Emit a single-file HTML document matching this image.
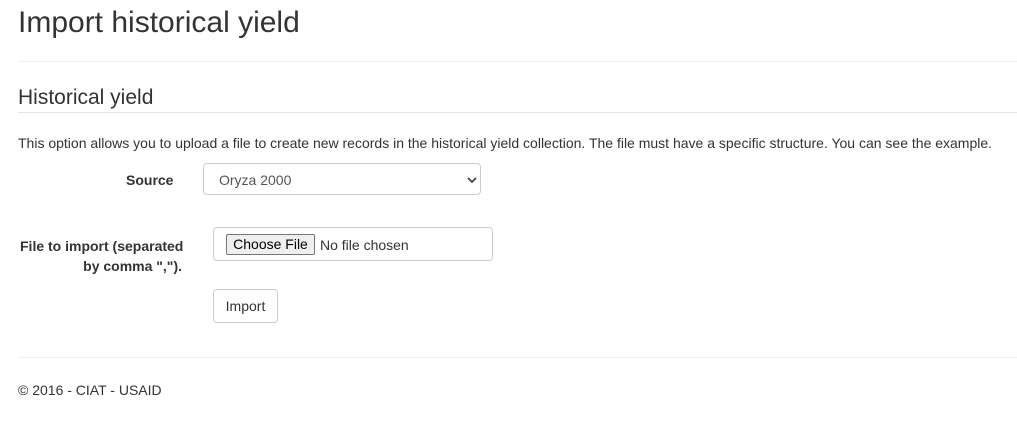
<!DOCTYPE html>
<html><head><style>
body{margin:0;background:#fff;font-family:"Liberation Sans",Arial,sans-serif;color:#333;font-size:14px;}
.a{position:absolute;white-space:nowrap;}
.hr{position:absolute;left:18px;right:0;height:1px;background:#eee;}
</style></head><body>
<div class="a" style="left:18px;top:6px;font-size:30px;font-weight:300;color:#333;">Import historical yield</div>
<div class="hr" style="top:61px"></div>
<div class="a" style="left:18px;top:86px;font-size:21px;">Historical yield</div>
<div class="hr" style="top:112px;background:#e5e5e5"></div>
<div class="a" style="left:18px;top:135px;font-size:14px;">This option allows you to upload a file to create new records in the historical yield collection. The file must have a specific structure. You can see the example.</div>
<div class="a" style="left:126px;top:172px;font-weight:bold;">Source</div>
<div class="a" style="left:203px;top:163px;width:278px;height:32px;border:1px solid #ccc;border-radius:4px;box-sizing:border-box;"></div>
<div class="a" style="left:219px;top:172px;color:#555;">Oryza 2000</div>
<svg class="a" style="left:467px;top:176px" width="10" height="8"><path d="M1 2 L5 6 L9 2" stroke="#444" stroke-width="1.8" fill="none"/></svg>
<div class="a" style="left:20px;top:236px;font-weight:bold;text-align:right;line-height:20px;width:162px;">File to import (separated<br>by comma ",").</div>
<div class="a" style="left:213px;top:227px;width:280px;height:34px;border:1px solid #ccc;border-radius:4px;box-sizing:border-box;"></div>
<div class="a" style="left:226px;top:234px;width:89px;height:21px;border:1px solid #767676;border-radius:2px;background:#efefef;box-sizing:border-box;font-size:14px;color:#000;text-align:center;line-height:19px;">Choose File</div>
<div class="a" style="left:320px;top:237px;color:#333;">No file chosen</div>
<div class="a" style="left:213px;top:289px;width:65px;height:34px;border:1px solid #ccc;border-radius:4px;box-sizing:border-box;text-align:center;line-height:32px;">Import</div>
<div class="hr" style="top:357px"></div>
<div class="a" style="left:18px;top:382px;">© 2016 - CIAT - USAID</div>
</body></html>
